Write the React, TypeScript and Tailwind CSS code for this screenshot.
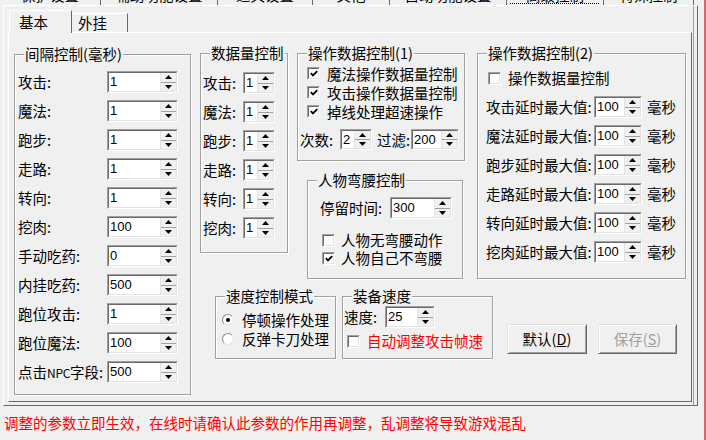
import React from 'react';

const LEFT_ROWS: [React.ReactNode, string][] = [
  ['攻击:', '1'],
  ['魔法:', '1'],
  ['跑步:', '1'],
  ['走路:', '1'],
  ['转向:', '1'],
  ['挖肉:', '100'],
  ['手动吃药:', '0'],
  ['内挂吃药:', '500'],
  ['跑位攻击:', '1'],
  ['跑位魔法:', '100'],
  [
    <>
      点击<span className="text-[12px] tracking-[-0.3px]">NPC</span>字段:
    </>,
    '500',
  ],
];

const DATA_ROWS = ['攻击:', '魔法:', '跑步:', '走路:', '转向:', '挖肉:'];

const DELAY_ROWS = ['攻击延时最大值:', '魔法延时最大值:', '跑步延时最大值:', '走路延时最大值:', '转向延时最大值:', '挖肉延时最大值:'];

const OUTER_TABS = [
  { label: '保护设置', w: 'w-[101px]' },
  { label: '辅助功能设置', w: 'w-[117px]' },
  { label: '道具设置', w: 'w-[95px]' },
  { label: '其他', w: 'w-[77px]' },
  { label: '自动功能设置', w: 'w-[117px]' },
  { label: '高级控制', w: 'w-[97px]', active: true },
  { label: '特殊控制', w: 'w-[90px]' },
];

const UpDown = () => (
  <div className="flex w-[16px] shrink-0 flex-col border-l border-[#e3e3e3] bg-[#f0f0f0]">
    <div className="flex flex-1 items-center justify-center border-b border-[#a0a0a0]">
      <svg width="7" height="4" viewBox="0 0 7 4">
        <path d="M0 4h7L3.5 0z" fill="#000" />
      </svg>
    </div>
    <div className="flex flex-1 items-center justify-center">
      <svg width="7" height="4" viewBox="0 0 7 4">
        <path d="M0 0h7L3.5 4z" fill="#000" />
      </svg>
    </div>
  </div>
);

const Spin = ({ value, className }: { value: string; className: string }) => (
  <div className={`flex shrink-0 border border-b-white border-l-[#a0a0a0] border-r-white border-t-[#a0a0a0] ${className}`}>
    <div className="flex flex-1 border border-b-[#e3e3e3] border-l-[#696969] border-r-[#e3e3e3] border-t-[#696969] bg-white">
      <span className="flex-1 pl-[1px] font-['Liberation_Sans',sans-serif] text-[13px] leading-[18px] text-black">{value}</span>
      <UpDown />
    </div>
  </div>
);

const Check = ({ checked }: { checked?: boolean }) => (
  <div className="flex h-[13px] w-[13px] shrink-0 border border-b-white border-l-[#a0a0a0] border-r-white border-t-[#a0a0a0]">
    <div className="flex flex-1 items-center justify-center border border-b-[#e3e3e3] border-l-[#696969] border-r-[#e3e3e3] border-t-[#696969] bg-white">
      {checked && (
        <svg width="8" height="7" viewBox="0 0 8 7">
          <path d="M0.8 3.2L3 5.4L7.2 1.2" stroke="#000" strokeWidth="1.9" fill="none" />
        </svg>
      )}
    </div>
  </div>
);

const Radio = ({ checked }: { checked?: boolean }) => (
  <div className="flex h-[12px] w-[12px] shrink-0 items-center justify-center rounded-full border border-b-[#e3e3e3] border-l-[#8a8a8a] border-r-[#e3e3e3] border-t-[#8a8a8a] bg-white">
    {checked && <div className="h-[4px] w-[4px] rounded-full bg-black" />}
  </div>
);

const Group = ({ title, className, children }: { title: string; className: string; children?: React.ReactNode }) => (
  <div className={`relative shrink-0 border border-[#a0a0a0] shadow-[inset_1px_1px_0_#fff,1px_1px_0_#fff] ${className}`}>
    <span className="absolute left-[9px] top-[-10px] whitespace-nowrap bg-[#f0f0f0] px-[1px] leading-[18px]">{title}</span>
    {children}
  </div>
);

const Button = ({ children, disabled }: { children: React.ReactNode; disabled?: boolean }) => (
  <div
    className={`flex h-[30px] shrink-0 items-center justify-center border border-b-[#696969] border-l-[#e3e3e3] border-r-[#696969] border-t-[#e3e3e3] shadow-[inset_1px_1px_0_#fff,inset_-1px_-1px_0_#a0a0a0] ${
      disabled ? 'text-[#a0a0a0]' : 'text-black'
    }`}
  >
    {children}
  </div>
);

export default function App() {
  return (
    <div className="flex h-[440px] w-[706px] overflow-hidden bg-[#f0f0f0] font-['Noto_Sans_CJK_SC','Noto_Sans',sans-serif] text-[14.5px] leading-[18px] text-black">
      <div className="w-[702px] shrink-0">
        {/* outer tab strip, clipped at the top */}
        <div className="flex h-[5px] overflow-hidden">
          {OUTER_TABS.map((t) => (
            <div key={t.label} className={`relative flex shrink-0 justify-center border-r border-[#696969] ${t.w}`}>
              <span className="mt-[-14px] whitespace-nowrap">{t.label}</span>
              {t.active && <div className="absolute bottom-[1px] left-[3px] right-[4px] border-b border-dotted border-black" />}
            </div>
          ))}
        </div>

        {/* outer panel */}
        <div className="ml-[3px] h-[401px] w-[695px] border-b border-l border-r border-t border-b-[#696969] border-l-white border-r-[#696969] border-t-white shadow-[inset_-3px_0_0_#f0f0f0,inset_-4px_0_0_#a0a0a0]">
          {/* inner tab strip */}
          <div className="ml-[5px] flex h-[26px] items-end">
            <div className="relative z-10 mb-[-1px] flex h-[23px] w-[63px] items-start border-l border-r border-t border-l-white border-r-[#696969] border-t-white bg-[#f0f0f0] pl-[9px] pt-[2px]">
              基本
            </div>
            <div className="flex h-[19px] w-[56px] items-start border-r border-t border-r-[#696969] border-t-white pl-[6px]">外挂</div>
          </div>

          {/* inner panel */}
          <div className="ml-[4px] h-[370px] w-[684px] border-b border-l border-r border-t border-b-[#696969] border-l-white border-r-[#696969] border-t-white">
            <div className="flex items-start">
              {/* 间隔控制 */}
              <Group title="间隔控制(毫秒)" className="ml-[5px] mt-[21px] h-[341px] w-[177px]">
                <div className="flex flex-col gap-[7px] pl-[3px] pt-[16px]">
                  {LEFT_ROWS.map(([label, value], i) => (
                    <div key={i} className="flex h-[22px] items-center">
                      <span className="w-[89px] shrink-0 whitespace-nowrap">{label}</span>
                      <Spin value={value} className="h-[22px] w-[71px]" />
                    </div>
                  ))}
                </div>
              </Group>

              {/* right column */}
              <div className="ml-[9px] mt-[20px] flex flex-col">
                <div className="flex items-start">
                  <Group title="数据量控制" className="h-[200px] w-[88px]">
                    <div className="flex flex-col gap-[7px] pl-[2px] pt-[18px]">
                      {DATA_ROWS.map((label) => (
                        <div key={label} className="flex h-[22px] items-center">
                          <span className="w-[40px] shrink-0 whitespace-nowrap">{label}</span>
                          <Spin value="1" className="h-[22px] w-[32px]" />
                        </div>
                      ))}
                    </div>
                  </Group>

                  <div className="ml-[9px] flex flex-col">
                    <Group title="操作数据控制(1)" className="h-[108px] w-[168px]">
                      <div className="flex flex-col pl-[9px] pt-[10px]">
                        {['魔法操作数据量控制', '攻击操作数据量控制', '掉线处理超速操作'].map((t) => (
                          <div key={t} className="flex h-[19px] items-center gap-[7px]">
                            <Check checked />
                            <span className="whitespace-nowrap leading-[17px]">{t}</span>
                          </div>
                        ))}
                      </div>
                      <div className="ml-[2px] mt-[8px] flex items-center">
                        <span className="w-[40px] shrink-0 whitespace-nowrap">次数:</span>
                        <Spin value="2" className="h-[21px] w-[32px]" />
                        <span className="ml-[5px] mr-[1px] shrink-0 whitespace-nowrap">过滤:</span>
                        <Spin value="200" className="h-[21px] w-[48px]" />
                      </div>
                    </Group>

                    <Group title="人物弯腰控制" className="ml-[10px] mt-[19px] h-[99px] w-[156px]">
                      <div className="flex items-center pl-[12px] pt-[16px]">
                        <span className="w-[70px] shrink-0 whitespace-nowrap">停留时间:</span>
                        <Spin value="300" className="h-[22px] w-[62px]" />
                      </div>
                      <div className="mt-[12px] flex flex-col pl-[14px]">
                        <div className="flex h-[18px] items-center gap-[6px]">
                          <Check />
                          <span className="whitespace-nowrap leading-[16px]">人物无弯腰动作</span>
                        </div>
                        <div className="flex h-[18px] items-center gap-[6px]">
                          <Check checked />
                          <span className="whitespace-nowrap leading-[16px]">人物自己不弯腰</span>
                        </div>
                      </div>
                    </Group>
                  </div>

                  <Group title="操作数据控制(2)" className="ml-[12px] h-[226px] w-[209px]">
                    <div className="mt-[15px] flex h-[18px] items-center gap-[7px] pl-[10px]">
                      <Check />
                      <span className="whitespace-nowrap">操作数据量控制</span>
                    </div>
                    <div className="mt-[9px] flex flex-col gap-[7px] pl-[8px]">
                      {DELAY_ROWS.map((label) => (
                        <div key={label} className="flex h-[22px] items-center">
                          <span className="w-[108px] shrink-0 whitespace-nowrap">{label}</span>
                          <Spin value="100" className="h-[22px] w-[48px]" />
                          <span className="ml-[5px] whitespace-nowrap">毫秒</span>
                        </div>
                      ))}
                    </div>
                  </Group>
                </div>

                <div className="ml-[15px] mt-[17px] flex items-start">
                  <Group title="速度控制模式" className="h-[63px] w-[121px]">
                    <div className="flex flex-col pl-[6px] pt-[13px]">
                      <div className="flex h-[19px] items-center gap-[8px]">
                        <Radio checked />
                        <span className="whitespace-nowrap leading-[17px]">停顿操作处理</span>
                      </div>
                      <div className="flex h-[19px] items-center gap-[8px]">
                        <Radio />
                        <span className="whitespace-nowrap leading-[17px]">反弹卡刀处理</span>
                      </div>
                    </div>
                  </Group>

                  <Group title="装备速度" className="ml-[6px] h-[63px] w-[151px]">
                    <div className="flex items-center pl-[1px] pt-[9px]">
                      <span className="w-[41px] shrink-0 whitespace-nowrap">速度:</span>
                      <Spin value="25" className="h-[22px] w-[50px]" />
                    </div>
                    <div className="mt-[4px] flex h-[18px] items-center gap-[7px] pl-[4px]">
                      <Check />
                      <span className="whitespace-nowrap text-[#ff0000]">自动调整攻击帧速</span>
                    </div>
                  </Group>

                  <div className="ml-[14px] mt-[28px] flex gap-[11px]">
                    <div className="w-[80px]">
                      <Button>
                        默认(<span className="underline">D</span>)
                      </Button>
                    </div>
                    <div className="w-[79px]">
                      <Button disabled>
                        保存(<span className="underline">S</span>)
                      </Button>
                    </div>
                  </div>
                </div>
              </div>
            </div>
          </div>
        </div>

        <div className="mt-[8px] whitespace-nowrap pl-[4px] text-[#ff0000]">
          调整的参数立即生效，在线时请确认此参数的作用再调整，乱调整将导致游戏混乱
        </div>
      </div>
      <div className="ml-[2px] w-[2px] shrink-0 bg-[#e06666]" />
    </div>
  );
}
